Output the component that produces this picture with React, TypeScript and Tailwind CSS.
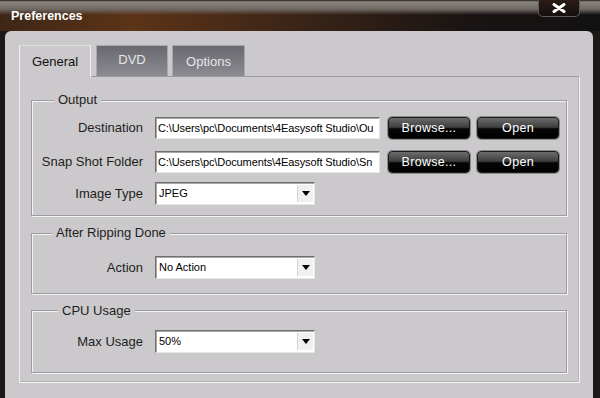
import React from 'react';

const etched =
  'border border-[#9d9b9f] shadow-[1px_1px_0_#f3f3f3,inset_1px_1px_0_#f3f3f3]';

const inset =
  'border border-t-[#6f6f6f] border-l-[#6f6f6f] border-r-[#e6e6e6] border-b-[#e6e6e6] shadow-[inset_1px_1px_0_#a8a8a8] bg-white';

function DarkButton({ label }: { label: string }) {
  return (
    <button
      className="w-[82px] h-[22px] rounded-[4px] border border-[#1a1a1a] shadow-[0_0_0_1px_#8d8b8e] bg-[linear-gradient(to_bottom,#6c6c6c_0%,#3e3e3e_46%,#070707_54%,#000_100%)] text-white text-[12.5px] leading-none tracking-[0.3px]"
    >
      {label}
    </button>
  );
}

function PathField({ value }: { value: string }) {
  return (
    <div className={`${inset} w-[225px] h-[22px] flex items-center pl-[2px] overflow-hidden`}>
      <span className="text-[11px] text-black whitespace-nowrap tracking-[-0.1px]">{value}</span>
    </div>
  );
}

function Select({ value }: { value: string }) {
  return (
    <div className={`${inset} w-[160px] h-[23px] flex items-center`}>
      <span className="flex-1 pl-[3px] text-[11px] text-black">{value}</span>
      <span className="w-[16px] h-[17px] mr-[1px] flex items-center justify-center bg-[#f0f0f0] border-l border-[#d4d4d4]">
        <svg width="8" height="5" viewBox="0 0 8 5">
          <path d="M0 0h8L4 5z" fill="#000" />
        </svg>
      </span>
    </div>
  );
}

function Row({ label, children }: { label: string; children: React.ReactNode }) {
  return (
    <div className="flex items-center">
      <span className="w-[111px] mr-[12px] text-right text-[13px] text-[#1e1e1e]">{label}</span>
      {children}
    </div>
  );
}

function Group({
  title,
  titleLeft,
  titleTop,
  className,
  children,
}: {
  title: string;
  titleLeft: string;
  titleTop: string;
  className: string;
  children: React.ReactNode;
}) {
  return (
    <div className={`relative w-[536px] ${etched} ${className}`}>
      <span
        className={`absolute ${titleLeft} ${titleTop} px-[4px] bg-[#cbc9cb] text-[13px] leading-[16px] text-[#1e1e1e]`}
      >
        {title}
      </span>
      {children}
    </div>
  );
}

export default function App() {
  return (
    <div className="w-[600px] h-[398px] overflow-hidden flex flex-col bg-[#1c1817] font-['Liberation_Sans',Arial,sans-serif]">
      {/* Title bar */}
      <div className="h-[31px] flex justify-between items-start bg-[linear-gradient(to_bottom,#1e1a18_0%,#8a847f_6%,#6d6661_30%,rgba(60,40,28,0)_48%),linear-gradient(to_right,#3e2616_0%,#5c3418_22%,#3a2417_50%,#191413_78%,#121111_100%)]">
        <span className="ml-[11px] mt-[8px] text-[12.5px] font-bold text-white leading-[16px]">
          Preferences
        </span>
        <div className="mr-[20px] w-[42px] h-[17px] rounded-b-[5px] border border-t-0 border-[#5e5a58] bg-[linear-gradient(to_bottom,#2a1c16,#150f0d)] flex items-center justify-center">
          <svg width="14" height="10" viewBox="0 0 14 10">
            <path d="M2 1.5 L12 8.5 M12 1.5 L2 8.5" stroke="#fff" strokeWidth="3" strokeLinecap="round" />
          </svg>
        </div>
      </div>

      {/* Body */}
      <div className="flex-1 ml-[5px] mr-[7px] rounded-t-[6px] bg-[#cbc9cb] pt-[14px] pl-[14px]">
        {/* Tabs */}
        <div className="relative z-10 flex items-end h-[32px] -mb-px">
          <div className="w-[72px] h-[32px] flex items-center justify-center bg-[#cbc9cb] border-t border-l border-r border-t-[#dedede] border-l-[#f4f4f4] border-r-[#f0f0f0] text-[13px] text-[#111]">
            General
          </div>
          <div className="ml-[5px] mb-px w-[72px] h-[31px] flex items-center justify-center pb-[2px] bg-[linear-gradient(to_bottom,#6a6970,#8c8b92)] border border-b-0 border-[#a9a8ad] text-[13px] text-[#e6e6e8]">
            DVD
          </div>
          <div className="ml-[4px] mb-px w-[73px] h-[31px] flex items-center justify-center pt-[2px] bg-[linear-gradient(to_bottom,#6a6970,#8c8b92)] border border-b-0 border-[#a9a8ad] text-[13px] text-[#e6e6e8]">
            Options
          </div>
        </div>

        {/* Tab panel */}
        <div className="w-[561px] h-[307px] border border-t-[#9b999d] border-l-[#eeeeee] border-r-[#f6f6f6] border-b-[#f6f6f6] shadow-[inset_-1px_-1px_0_#b5b3b6] pl-[11px]">
          <Group title="Output" titleLeft="left-[22px]" titleTop="-top-[9px]" className="mt-[23px] h-[116px]">
            <div className="pt-[16px] flex flex-col">
              <Row label="Destination">
                <PathField value="C:\Users\pc\Documents\4Easysoft Studio\Ou" />
                <div className="ml-[8px] flex gap-[7px]">
                  <DarkButton label="Browse..." />
                  <DarkButton label="Open" />
                </div>
              </Row>
              <div className="mt-[12px]">
                <Row label="Snap Shot Folder">
                  <PathField value="C:\Users\pc\Documents\4Easysoft Studio\Sn" />
                  <div className="ml-[8px] flex gap-[7px]">
                    <DarkButton label="Browse..." />
                    <DarkButton label="Open" />
                  </div>
                </Row>
              </div>
              <div className="mt-[9px]">
                <Row label="Image Type">
                  <Select value="JPEG" />
                </Row>
              </div>
            </div>
          </Group>

          <Group
            title="After Ripping Done"
            titleLeft="left-[20px]"
            titleTop="-top-[9px]"
            className="mt-[17px] h-[61px]"
          >
            <div className="pt-[22px]">
              <Row label="Action">
                <Select value="No Action" />
              </Row>
            </div>
          </Group>

          <Group title="CPU Usage" titleLeft="left-[26px]" titleTop="-top-[8px]" className="mt-[16px] h-[63px]">
            <div className="pt-[19px]">
              <Row label="Max Usage">
                <Select value="50%" />
              </Row>
            </div>
          </Group>
        </div>
      </div>
    </div>
  );
}
